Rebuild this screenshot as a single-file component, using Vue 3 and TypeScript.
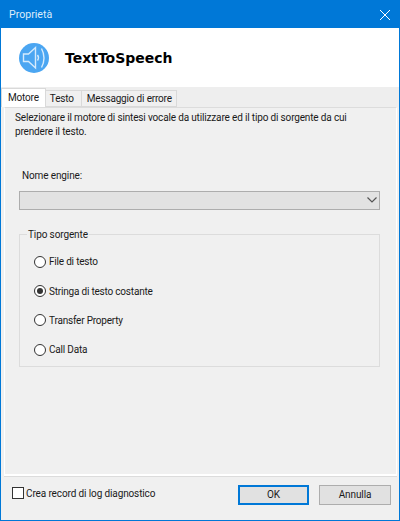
<template>
  <div class="window">
    <div class="titlebar">
      <span class="title">Proprietà</span>
      <svg class="close" viewBox="0 0 10 10"><path d="M0 0 L10 10 M10 0 L0 10" /></svg>
    </div>

    <div class="header">
      <svg class="logo" viewBox="0 0 30 30">
        <circle cx="15" cy="15" r="15" fill="#4ba6f2" />
        <path d="M4.5 11 H9.5 L16.5 4.5 V25 L9.5 18.5 H4.5 Z" class="logo-line" />
        <path d="M18.5 12 Q20.5 14.7 18.5 17.5" class="logo-line" />
        <path d="M22.5 5.5 Q27.5 15 22.5 24.5" class="logo-line" />
      </svg>
      <span class="app-name">TextToSpeech</span>
    </div>

    <div class="tabs">
      <div
        v-for="tab in tabs"
        :key="tab"
        class="tab"
        :class="{ active: tab === activeTab }"
      >
        {{ tab }}
      </div>
    </div>

    <div class="panel">
      <p class="intro">
        Selezionare il motore di sintesi vocale da utilizzare ed il tipo di sorgente da cui
        prendere il testo.
      </p>

      <div class="engine-label">Nome engine:</div>
      <div class="combo">
        <svg class="chevron" viewBox="0 0 10 6"><path d="M0.5 0.5 L5 5 L9.5 0.5" /></svg>
      </div>

      <fieldset class="group">
        <legend>Tipo sorgente</legend>
        <div v-for="item in sources" :key="item" class="radio-row">
          <span class="radio" :class="{ checked: item === selectedSource }"></span>
          <span>{{ item }}</span>
        </div>
      </fieldset>
    </div>

    <div class="footer">
      <label class="check-row">
        <span class="checkbox"></span>
        <span>Crea record di log diagnostico</span>
      </label>
      <div class="buttons">
        <div class="btn primary">OK</div>
        <div class="btn">Annulla</div>
      </div>
    </div>
  </div>
</template>

<script setup lang="ts">
const tabs: string[] = ['Motore', 'Testo', 'Messaggio di errore'];
const activeTab = 'Motore';

const sources: string[] = ['File di testo', 'Stringa di testo costante', 'Transfer Property', 'Call Data'];
const selectedSource = 'Stringa di testo costante';
</script>

<style scoped>
.window {
  width: 400px;
  height: 521px;
  box-sizing: border-box;
  display: flex;
  flex-direction: column;
  border: 1px solid #0078d7;
  background: #f0f0f0;
  font-family: Roboto, "Liberation Sans", sans-serif;
  font-size: 10px;
  letter-spacing: -0.12px;
  color: #1a1a1a;
  overflow: hidden;
}

.titlebar {
  height: 27px;
  flex: none;
  display: flex;
  align-items: center;
  justify-content: space-between;
  padding: 0 9px 0 8px;
  background: #0078d7;
  color: #dcecfa;
  font-size: 10.6px;
  letter-spacing: 0;
}

.close {
  width: 10px;
  height: 10px;
}

.close path {
  stroke: #fff;
  stroke-width: 1;
  fill: none;
}

.header {
  height: 59px;
  flex: none;
  box-sizing: border-box;
  display: flex;
  align-items: center;
  gap: 16px;
  padding: 1px 0 0 18px;
  background: #fff;
}

.logo {
  width: 30px;
  height: 30px;
}

.logo-line {
  fill: none;
  stroke: #d5ebfd;
  stroke-width: 1.4;
}

.app-name {
  font-family: "DejaVu Sans", sans-serif;
  font-weight: 700;
  font-size: 14px;
  letter-spacing: 0;
  color: #000;
}

.tabs {
  flex: none;
  height: 20px;
  display: flex;
  align-items: flex-end;
  background: #eeeeee;
  letter-spacing: -0.18px;
}

.tab {
  height: 17px;
  box-sizing: border-box;
  padding: 0 4px 0 5px;
  line-height: 16px;
  background: #f0f0f0;
  border: 1px solid #d9d9d9;
  border-left: 0;
}

.tab:nth-child(2) {
  padding: 0 7px 0 4px;
}

.tab.active {
  height: 19px;
  padding: 0 6px;
  line-height: 18px;
  background: #fff;
  border-left: 1px solid #d9d9d9;
  border-bottom: 0;
}

.panel {
  flex: none;
  height: 369px;
  box-sizing: border-box;
  margin: 0 2px 0 3px;
  padding: 3px 16px 0 10px;
  border: 1px solid #dcdcdc;
  border-left-color: #fff;
  border-right-color: #fff;
  border-bottom: 2px solid #fff;
  box-shadow: 0 1px 0 #dcdcdc;
}

.intro {
  margin: 0;
  line-height: 14px;
  letter-spacing: -0.16px;
}

.engine-label {
  margin: 29px 0 0 7px;
  line-height: 15px;
}

.combo {
  position: relative;
  height: 19px;
  margin: 8px 0 0 4px;
  box-sizing: border-box;
  background: #e2e2e2;
  border: 1px solid #adadad;
}

.chevron {
  position: absolute;
  right: 2px;
  top: 5px;
  width: 10px;
  height: 6px;
  fill: none;
  stroke: #555;
  stroke-width: 1.2;
}

.group {
  margin: 17px 0 0 4px;
  padding: 5px 0 0 14px;
  height: 140px;
  box-sizing: border-box;
  border: 1px solid #dcdcdc;
  min-width: 0;
}

.group legend {
  padding: 0 1px;
  margin-left: -7px;
  line-height: 15px;
}

.radio-row {
  display: flex;
  align-items: center;
  gap: 3px;
  height: 29.4px;
  letter-spacing: -0.2px;
}

.radio {
  width: 12px;
  height: 12px;
  box-sizing: border-box;
  border: 1px solid #333;
  border-radius: 50%;
  background: #fff;
  position: relative;
}

.radio.checked::after {
  content: "";
  position: absolute;
  inset: 2px;
  border-radius: 50%;
  background: #333;
}

.footer {
  flex: 1;
  display: flex;
  align-items: flex-start;
  justify-content: space-between;
  padding: 9px 8px 0 11px;
}

.check-row {
  display: flex;
  align-items: center;
  gap: 2px;
  margin-top: 2px;
}

.checkbox {
  width: 12px;
  height: 12px;
  box-sizing: border-box;
  border: 1px solid #333;
  background: #fff;
}

.buttons {
  display: flex;
  gap: 10px;
}

.btn {
  width: 72px;
  height: 20px;
  box-sizing: border-box;
  text-align: center;
  line-height: 18px;
  background: #e1e1e1;
  border: 1px solid #adadad;
}

.btn.primary {
  width: 71px;
  border: 2px solid #0078d7;
  line-height: 16px;
}
</style>

<style>
html, body {
  margin: 0;
  background: #f0f0f0;
}
</style>
